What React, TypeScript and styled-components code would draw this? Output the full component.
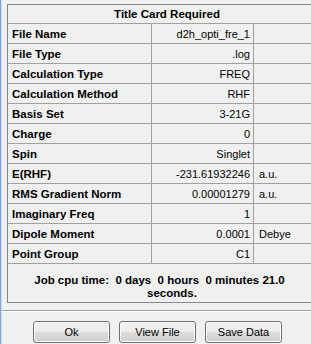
import React from 'react'
import styled, { createGlobalStyle } from 'styled-components'

const GlobalStyle = createGlobalStyle`
  html, body {
    margin: 0;
    padding: 0;
    background: #f0f0f0;
  }
  * {
    box-sizing: border-box;
  }
`

const Window = styled.div`
  width: 311px;
  height: 344px;
  overflow: hidden;
  background: #f0f0f0;
  border-left: 1px solid #7fa6d3;
  box-shadow: inset 1px 0 0 #c9dcf0;
  font-family: "Liberation Sans", Arial, sans-serif;
  color: #000;
`

const Panel = styled.div`
  width: 320px;
  margin: 4px 0 0 6px;
  border: 1px solid #828790;
`

const TitleRow = styled.div`
  height: 19px;
  border-bottom: 1px solid #a0a0a0;
  display: flex;
  align-items: center;
  justify-content: center;
  font-size: 11.5px;
  font-weight: bold;
`

const Row = styled.div`
  display: grid;
  grid-template-columns: 144px 102px 1fr;
  height: 20px;
  border-bottom: 1px solid #a0a0a0;
`

const Cell = styled.div<{ $align?: 'left' | 'right'; $bold?: boolean; $last?: boolean }>`
  display: flex;
  align-items: center;
  justify-content: ${p => (p.$align === 'right' ? 'flex-end' : 'flex-start')};
  padding: ${p => (p.$align === 'right' ? '0 3px 0 0' : p.$bold ? '0 0 0 4px' : '0 0 0 5px')};
  border-right: ${p => (p.$last ? 'none' : '1px solid #a0a0a0')};
  font-size: ${p => (p.$bold ? '11.5px' : '11px')};
  font-weight: ${p => (p.$bold ? 'bold' : 'normal')};
  white-space: nowrap;
`

const JobArea = styled.div`
  width: 303px;
  height: 38px;
  padding-top: 10px;
  font-size: 11.5px;
  font-weight: bold;
  line-height: 13px;
`

const JobLine = styled.div<{ $shift?: number }>`
  text-align: center;
  white-space: pre;
  padding-left: ${p => p.$shift ?? 0}px;
`

const Separator = styled.div`
  margin-top: 7px;
  height: 2px;
  border-top: 1px solid #a0a0a0;
  border-bottom: 1px solid #ffffff;
`

const ButtonBar = styled.div`
  display: flex;
  gap: 9px;
  margin: 9px 0 0 32px;
`

const Button = styled.button`
  width: 77px;
  height: 22px;
  padding: 0;
  border: 1px solid #707070;
  border-radius: 3px;
  background: linear-gradient(#f2f2f2 0%, #ebebeb 50%, #dddddd 50%, #cfcfcf 100%);
  box-shadow: inset 0 0 0 1px #fcfcfc;
  font-family: "Liberation Sans", Arial, sans-serif;
  font-size: 11px;
  color: #000;
`

const rows: [string, string, string][] = [
  ['File Name', 'd2h_opti_fre_1', ''],
  ['File Type', '.log', ''],
  ['Calculation Type', 'FREQ', ''],
  ['Calculation Method', 'RHF', ''],
  ['Basis Set', '3-21G', ''],
  ['Charge', '0', ''],
  ['Spin', 'Singlet', ''],
  ['E(RHF)', '-231.61932246', 'a.u.'],
  ['RMS Gradient Norm', '0.00001279', 'a.u.'],
  ['Imaginary Freq', '1', ''],
  ['Dipole Moment', '0.0001', 'Debye'],
  ['Point Group', 'C1', ''],
]

const App = (): JSX.Element => {
  return (
    <Window>
      <GlobalStyle />
      <Panel>
        <TitleRow>Title Card Required</TitleRow>
        {rows.map(([label, value, unit]) => (
          <Row key={label}>
            <Cell $bold>{label}</Cell>
            <Cell $align="right">{value}</Cell>
            <Cell $last>{unit}</Cell>
          </Row>
        ))}
        <JobArea>
          <JobLine>{'Job cpu time:  0 days  0 hours  0 minutes 21.0'}</JobLine>
          <JobLine $shift={25}>seconds.</JobLine>
        </JobArea>
      </Panel>
      <Separator />
      <ButtonBar>
        <Button>Ok</Button>
        <Button>View File</Button>
        <Button>Save Data</Button>
      </ButtonBar>
    </Window>
  )
}

export default App
